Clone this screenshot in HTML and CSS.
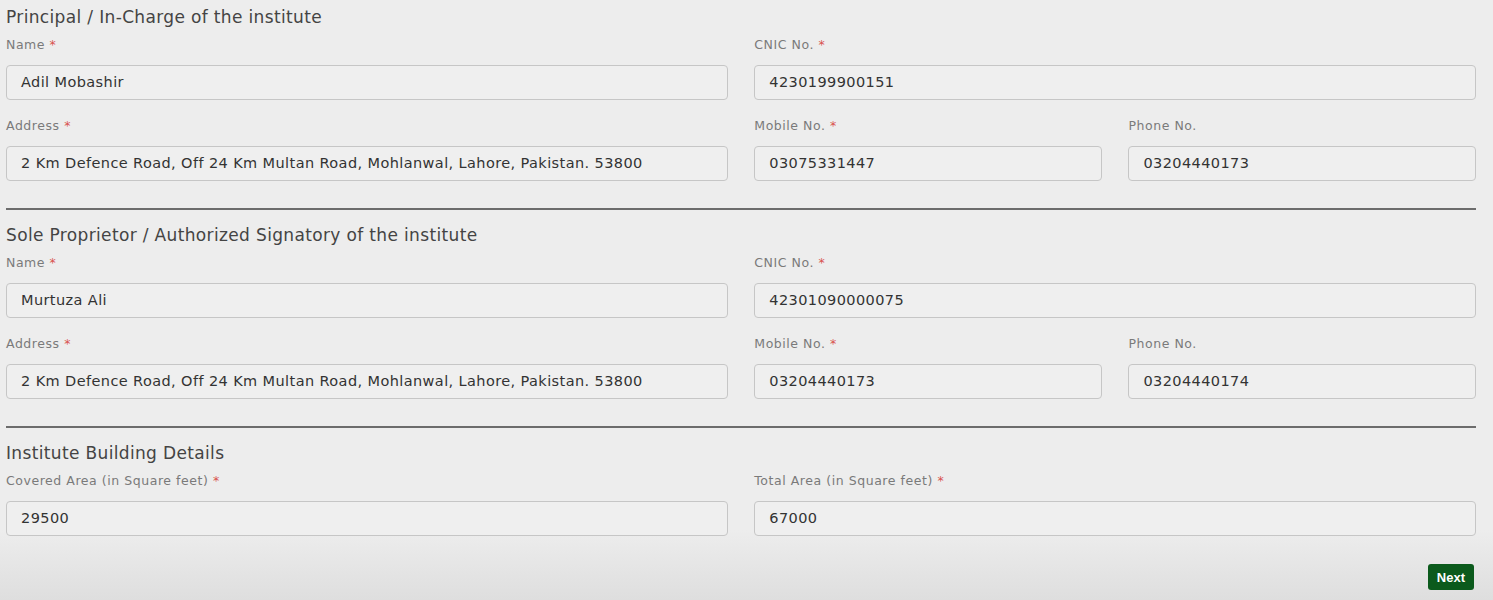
FILE: index.html
```html
<!DOCTYPE html>
<html>
<head>
<meta charset="utf-8">
<link rel="stylesheet" href="styles.css">
</head>
<body>
<div class="page">
  <section class="section">
    <h2 class="title">Principal / In-Charge of the institute</h2>
    <div class="grid">
      <div class="field span2"><label class="label">Name <span class="req">*</span></label><div class="input">Adil Mobashir</div></div>
      <div class="field span2"><label class="label">CNIC No. <span class="req">*</span></label><div class="input">4230199900151</div></div>
      <div class="field span2"><label class="label">Address <span class="req">*</span></label><div class="input">2 Km Defence Road, Off 24 Km Multan Road, Mohlanwal, Lahore, Pakistan. 53800</div></div>
      <div class="field"><label class="label">Mobile No. <span class="req">*</span></label><div class="input">03075331447</div></div>
      <div class="field"><label class="label">Phone No.</label><div class="input">03204440173</div></div>
    </div>
  </section>
  <hr class="divider">
  <section class="section">
    <h2 class="title">Sole Proprietor / Authorized Signatory of the institute</h2>
    <div class="grid">
      <div class="field span2"><label class="label">Name <span class="req">*</span></label><div class="input">Murtuza Ali</div></div>
      <div class="field span2"><label class="label">CNIC No. <span class="req">*</span></label><div class="input">42301090000075</div></div>
      <div class="field span2"><label class="label">Address <span class="req">*</span></label><div class="input">2 Km Defence Road, Off 24 Km Multan Road, Mohlanwal, Lahore, Pakistan. 53800</div></div>
      <div class="field"><label class="label">Mobile No. <span class="req">*</span></label><div class="input">03204440173</div></div>
      <div class="field"><label class="label">Phone No.</label><div class="input">03204440174</div></div>
    </div>
  </section>
  <hr class="divider">
  <section class="section">
    <h2 class="title">Institute Building Details</h2>
    <div class="grid">
      <div class="field span2"><label class="label">Covered Area (in Square feet) <span class="req">*</span></label><div class="input">29500</div></div>
      <div class="field span2"><label class="label">Total Area (in Square feet) <span class="req">*</span></label><div class="input">67000</div></div>
    </div>
  </section>
  <div class="actions"><button class="btn">Next</button></div>
</div>
</body>
</html>
```
FILE: styles.css
```css
html, body {
  margin: 0;
  padding: 0;
}
body {
  background: linear-gradient(#ededed 0, #ededed 530px, #dedede 600px);
  min-height: 600px;
  font-family: "DejaVu Sans", "Open Sans", sans-serif;
  color: #333;
}
.page {
  width: 1470px;
  padding: 0 0 0 6px;
}
.section {
  display: flex;
  flex-direction: column;
}
.title {
  margin: 6px 0 0;
  font-size: 17px;
  line-height: 22px;
  font-weight: 400;
  letter-spacing: 0.35px;
  color: #444;
}
.grid {
  display: grid;
  grid-template-columns: repeat(4, 1fr);
  column-gap: 26.6px;
  row-gap: 18px;
  margin-top: 9px;
}
.span2 {
  grid-column: span 2;
}
.field {
  display: flex;
  flex-direction: column;
}
.label {
  font-size: 12.5px;
  line-height: 16px;
  letter-spacing: 0.55px;
  color: #7a7a7a;
  margin-bottom: 12px;
}
.req {
  color: #d9534f;
}
.input {
  height: 33px;
  border: 1px solid #c6c6c6;
  border-radius: 4px;
  background: #efefef;
  font-size: 14.5px;
  line-height: 33px;
  letter-spacing: 0.4px;
  padding: 0 14px;
  color: #333;
}
.divider {
  border: 0;
  height: 2px;
  background: #6c6c6c;
  margin: 27px 0 8px;
}
.actions {
  display: flex;
  justify-content: flex-end;
  margin-top: 28px;
}
.btn {
  background: #0b5a1c;
  color: #fff;
  border: 0;
  border-radius: 3px;
  font-family: "Liberation Sans", Arial, sans-serif;
  font-size: 13px;
  font-weight: 700;
  height: 26px;
  padding: 0 9px;
  margin-right: 2px;
}
```
